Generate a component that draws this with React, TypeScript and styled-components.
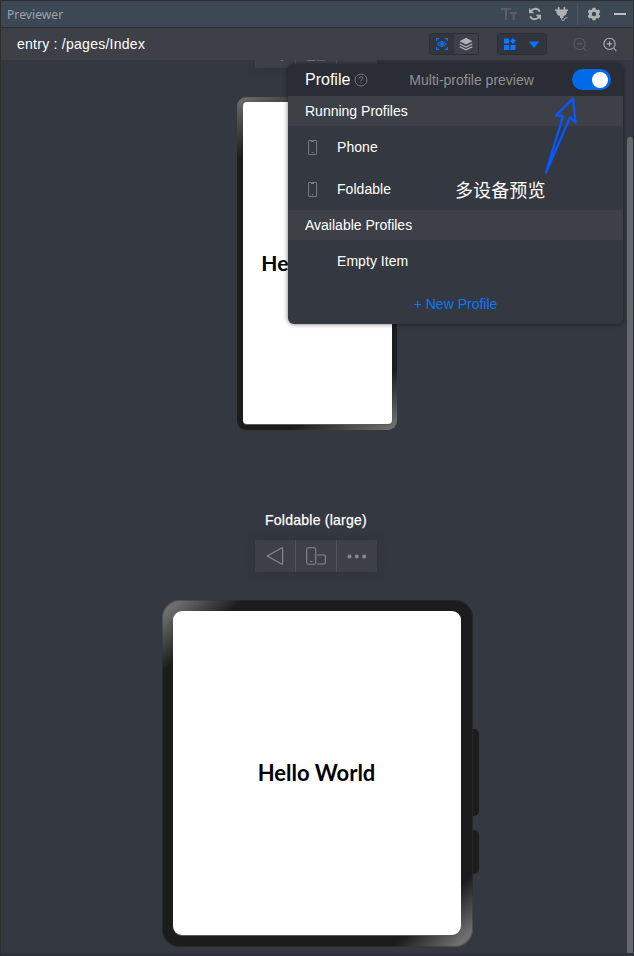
import React from "react";
import styled, { createGlobalStyle } from "styled-components";

const GlobalStyle = createGlobalStyle`
  * { box-sizing: border-box; }
  body { margin: 0; background: #343840; }
  svg { display: block; flex: none; }
`;

const Window = styled.div`
  position: relative;
  display: flex;
  flex-direction: column;
  width: 634px;
  height: 956px;
  overflow: hidden;
  border: 1px solid #2d2e30;
  border-bottom: 3px solid #30323a;
  background: #343840;
  color: #fff;
  font-family: "Liberation Sans", Arial, sans-serif;
  font-size: 14px;
`;

const TitleBar = styled.header`
  display: flex;
  align-items: center;
  flex: none;
  height: 27px;
  padding: 0 7px 0 6px;
  border-bottom: 1px solid #2b2c2f;
  background: #3d4855;
  color: #afb1b3;
`;

const WindowTitle = styled.h1`
  flex: 1;
  margin: 0;
  padding-top: 2px;
  color: #9da3a9;
  font: 400 12px/16px "Noto Sans", sans-serif;
  letter-spacing: 0.1px;
`;

const TitleIcons = styled.div`
  display: flex;
  align-items: center;
`;

const TitleIcon = styled.span<{ $gap?: number }>`
  margin-left: ${(p) => p.$gap ?? 0}px;
`;

const TitleDivider = styled.span`
  width: 1px;
  height: 21px;
  margin: 0 9px 0 7px;
  background: #515356;
`;

const Toolbar = styled.div`
  display: flex;
  align-items: center;
  flex: none;
  height: 32px;
  padding: 0 15px 0 16px;
  background: #3d4047;
`;

const PagePath = styled.div`
  flex: 1;
  line-height: 16px;
  letter-spacing: 0.26px;
`;

const ToggleGroup = styled.div`
  display: flex;
  width: 50px;
  height: 22px;
  margin-right: 18px;
  overflow: hidden;
  border: 1px solid #2b2d33;
  border-radius: 3px;
`;

const ToggleButton = styled.button<{ $dark?: boolean }>`
  display: flex;
  align-items: center;
  justify-content: center;
  flex: 1;
  padding: 0;
  border: 0;
  background: ${(p) => (p.$dark ? "#32353d" : "#3d4047")};
`;

const ZoomButtons = styled.div`
  display: flex;
  gap: 14px;
  margin-left: 7px;
`;

const Stage = styled.main`
  position: relative;
  display: flex;
  flex-direction: column;
  align-items: center;
  flex: 1;
  min-height: 0;
  overflow: hidden;
`;

const DeviceActions = styled.div<{ $top: number; $bottom: number }>`
  display: grid;
  grid-template-columns: 40px 40px 40px;
  gap: 1px;
  flex: none;
  height: 32px;
  margin: ${(p) => p.$top}px 2px ${(p) => p.$bottom}px 0;
  background: #50535a;
  box-shadow: 0 0 8px rgba(30, 32, 38, 0.25);
`;

const DeviceAction = styled.button`
  display: flex;
  align-items: center;
  justify-content: center;
  padding: 0;
  border: 0;
  background: #3d4048;
`;

const DeviceName = styled.h2`
  margin: 81px 0 0;
  padding-right: 2px;
  font-size: 14px;
  font-weight: 400;
  line-height: 18px;
  letter-spacing: 0.24px;
  -webkit-text-stroke: 0.25px #fff;
`;

const PhoneBody = styled.div`
  flex: none;
  width: 160px;
  height: 333px;
  padding: 5px 5px 6px 6px;
  border-radius: 9px;
  background:
    linear-gradient(150deg, #707070 0, rgba(29, 29, 29, 0) 54px),
    linear-gradient(330deg, #707070 4px, rgba(29, 29, 29, 0) 54px), #1c1c1c;
`;

const FoldableBody = styled.div`
  position: relative;
  flex: none;
  width: 311px;
  height: 347px;
  padding: 11px 12px 12px 11px;
  border-radius: 18px;
  background:
    linear-gradient(138deg, #6e6e6e 12px, rgba(29, 29, 29, 0) 54px),
    linear-gradient(318deg, #707070 12px, rgba(29, 29, 29, 0) 54px), #1c1c1c;
  box-shadow: inset 0 0 0 1px rgba(50, 50, 50, 0.5);
`;

const Screen = styled.div<{ $radius: number; $size: number }>`
  display: flex;
  align-items: center;
  justify-content: center;
  height: 100%;
  border-radius: ${(p) => p.$radius}px;
  background: #fff;
  box-shadow: 0 1px 0 #5b5b5b;
  color: #000;
  font: 700 ${(p) => p.$size}px/26px Lato, sans-serif;
  white-space: nowrap;
`;

const SideKey = styled.span<{ $top: number; $height: number }>`
  position: absolute;
  left: 100%;
  top: ${(p) => p.$top}px;
  width: 6px;
  height: ${(p) => p.$height}px;
  border-radius: 0 5px 5px 0;
  background: #1c1c1c;
`;

const ScrollThumb = styled.div`
  position: absolute;
  top: 77px;
  right: 0;
  bottom: 0;
  width: 6px;
  border-radius: 3px 3px 0 0;
  background: #65686c;
`;

const ProfileMenu = styled.section`
  position: absolute;
  top: 63px;
  left: 287px;
  width: 335px;
  height: 260px;
  border-radius: 6px;
  background: #343840;
  box-shadow: 0 0 5px rgba(0, 0, 0, 0.55);
`;

const MenuHeader = styled.header`
  display: flex;
  align-items: center;
  height: 32px;
  padding: 0 12px 0 17px;
  border-radius: 6px 6px 0 0;
  background: #2a2d34;
`;

const MenuTitle = styled.h2`
  margin: 0 4px 0 0;
  font-size: 16px;
  font-weight: 400;
`;

const PreviewLabel = styled.span`
  margin-left: 41px;
  color: #909192;
`;

const Switch = styled.button`
  display: flex;
  align-items: center;
  justify-content: flex-end;
  width: 39px;
  height: 21px;
  margin: -1px 0 0 auto;
  padding: 0 3px;
  border: 0;
  border-radius: 11px;
  background: #006ae8;
`;

const SwitchKnob = styled.span`
  width: 16px;
  height: 16px;
  border-radius: 50%;
  background: #fff;
`;

const SectionTitle = styled.h3`
  height: 30px;
  margin: 0;
  padding-left: 17px;
  background: #3d4047;
  font-size: 14px;
  font-weight: 400;
  line-height: 30px;
`;

const ProfileRow = styled.div`
  display: grid;
  grid-template-columns: 29px 1fr;
  align-items: center;
  height: 42px;
  padding-left: 20px;
  letter-spacing: 0.05px;
`;

const NewProfile = styled.button`
  display: block;
  width: 100%;
  height: 42px;
  padding: 2px 0 0;
  border: 0;
  background: transparent;
  color: #0877ff;
  font: inherit;
`;

const Callout = styled.p`
  position: absolute;
  top: 175px;
  left: 454px;
  margin: 0;
  font: 400 18px/26px "Noto Sans CJK SC", sans-serif;
  letter-spacing: 0.1px;
`;

const CalloutArrow = styled.svg`
  position: absolute;
  top: 94px;
  left: 539px;
`;

const PhoneIcon = () => (
  <svg width="9" height="15" viewBox="0 0 9 15" fill="none" stroke="#77797d">
    <rect x=".5" y=".5" width="8" height="14" rx=".3" />
    <path d="M3 1.5h3M3.800 12.500h1.400" />
  </svg>
);

const Actions = ({ top, bottom }: { top: number; bottom: number }) => (
  <DeviceActions $top={top} $bottom={bottom}>
    <DeviceAction aria-label="Back">
      <svg width="18" height="20" viewBox="0 0 18 20" fill="none" stroke="#85878a" strokeWidth="1.2" strokeLinejoin="round">
        <path d="M1.200 10 16 1.800q.6-.3.6.6v15.200q0 .9-.6.6Z" />
      </svg>
    </DeviceAction>
    <DeviceAction aria-label="Rotate device">
      <svg width="20" height="18" viewBox="0 0 20 18" fill="none" stroke="#85878a" strokeWidth="1.1">
        <rect x=".7" y=".7" width="9" height="16.500" rx="1.500" />
        <path d="M4 14.500h2.400M11 8h7q1.400 0 1.400 1.400v6.200q0 1.400-1.400 1.400h-7" />
      </svg>
    </DeviceAction>
    <DeviceAction aria-label="More">
      <svg width="20" height="6" viewBox="0 0 20 6" fill="#85878a">
        <circle cx="2.500" cy="3.500" r="2" />
        <circle cx="9.800" cy="3.500" r="2" />
        <circle cx="17.100" cy="3.500" r="2" />
      </svg>
    </DeviceAction>
  </DeviceActions>
);

const ZoomIcon = ({ plus }: { plus?: boolean }) => (
  <svg width="16" height="16" viewBox="0 0 16 16" fill="none" stroke={plus ? "#aeb0b3" : "#5a5d63"} strokeWidth="1.1">
    <circle cx="7.500" cy="7.900" r="5.600" />
    <path d="m11.600 12 2.600 2.800M4.800 7.900h5.400" />
    {plus && <path d="M7.500 5.200v5.400" />}
  </svg>
);

export default function App() {
  return (
    <>
      <GlobalStyle />
      <Window>
        <TitleBar>
          <WindowTitle>Previewer</WindowTitle>
          <TitleIcons>
            <TitleIcon>
              <svg width="17" height="14" viewBox="0 0 17 14" fill="#5e5e5d">
                <path d="M0 1h10v2H6v10H4V3H0ZM9 5h7v2h-2.500v6h-2V7H9Z" />
              </svg>
            </TitleIcon>
            <TitleIcon $gap={10}>
              <svg width="14" height="14" viewBox="0 0 14 14" fill="none" stroke="#afb1b3" strokeWidth="2">
                <path d="M11.800 4.600A5 5 0 0 0 3 4.200M2.200 9.400A5 5 0 0 0 11 9.800" />
                <path fill="#afb1b3" stroke="none" d="M1 1v5.300h5.300ZM13 13V7.700H7.700Z" />
              </svg>
            </TitleIcon>
            <TitleIcon $gap={12}>
              <svg width="16" height="16" viewBox="0 0 16 16" fill="#afb1b3">
                <path d="M1 3.500h2.500L4 1h1.500v2.500h4V1H11l.5 2.500H14V5h-1c0 3-1.300 4.800-3.500 5v2H6v-2C3.500 9.800 2.300 8 2.300 5H1Z" />
                <path d="M7.700 11v2.200q0 1.300 1.400 1.300t1.400-1.300q0-1.500 3-1.500" fill="none" stroke="#afb1b3" />
              </svg>
            </TitleIcon>
            <TitleDivider />
            <TitleIcon>
              <svg width="14" height="14" viewBox="0 0 14 14">
                <path fill="#afb1b3" fillRule="evenodd" d="M5.500.7h3l.4 1.700 1.200.7 1.700-.6 1.500 2.600L12 6.400v1.200l1.300 1.300-1.500 2.600-1.700-.6-1.200.7-.4 1.700h-3l-.4-1.700-1.200-.7-1.700.6L.7 8.900 2 7.600V6.400L.7 5.100l1.500-2.600 1.700.6 1.200-.7ZM7 4.800a2.200 2.200 0 1 0 0 4.400 2.200 2.200 0 0 0 0-4.400Z" />
              </svg>
            </TitleIcon>
            <TitleIcon $gap={13}>
              <svg width="12" height="14" viewBox="0 0 12 14">
                <path d="M0 7h12" stroke="#bdbfc1" strokeWidth="2" />
              </svg>
            </TitleIcon>
          </TitleIcons>
        </TitleBar>

        <Toolbar>
          <PagePath>entry : /pages/Index</PagePath>
          <ToggleGroup>
            <ToggleButton $dark aria-label="Preview">
              <svg width="12" height="12" viewBox="0 0 12 12" fill="none" stroke="#0877ff" strokeWidth="1.100">
                <path d="M.6 3V.6H3M9 .6h2.400V3M11.400 9v2.400H9M3 11.400H.6V9" />
                <path d="M1.500 6Q6 .9 10.500 6 6 11.100 1.500 6Z" />
                <circle cx="6" cy="6" r="1.300" fill="#0877ff" />
              </svg>
            </ToggleButton>
            <ToggleButton aria-label="Layers">
              <svg width="14" height="14" viewBox="0 0 14 14" fill="none" stroke="#b0b1b3" strokeWidth="1.200">
                <path fill="#b0b1b3" stroke="none" d="m7 .8 6.500 3.400L7 7.600.5 4.200Z" />
                <path d="m.7 6.800 6.300 3.300 6.300-3.300M.7 9.600 7 12.900l6.300-3.300" />
              </svg>
            </ToggleButton>
          </ToggleGroup>
          <ToggleGroup>
            <ToggleButton $dark aria-label="Profiles">
              <svg width="12" height="12" viewBox="0 0 12 12" fill="#0877ff">
                <path d="M0 .5h5v5H0ZM0 7h5v5H0ZM6.500 7h5v5h-5ZM9 0l3 3-3 3-3-3Z" />
              </svg>
            </ToggleButton>
            <ToggleButton $dark aria-label="Open profiles">
              <svg width="10" height="7" viewBox="0 0 10 7">
                <path d="M.7.500h8.600q.8 0 .3.700L5.600 6.300q-.6.700-1.200 0L.4 1.200Q-.1.500.7.500Z" fill="#0877ff" />
              </svg>
            </ToggleButton>
          </ToggleGroup>
          <ZoomButtons>
            <ZoomIcon />
            <ZoomIcon plus />
          </ZoomButtons>
        </Toolbar>

        <Stage>
          <Actions top={-24} bottom={29} />
          <PhoneBody>
            <Screen $radius={4} $size={21}>Hello World</Screen>
          </PhoneBody>
          <DeviceName>Foldable (large)</DeviceName>
          <Actions top={11} bottom={28} />
          <FoldableBody>
            <Screen $radius={9} $size={22}>Hello World</Screen>
            <SideKey $top={129} $height={87} />
            <SideKey $top={230} $height={44} />
          </FoldableBody>
          <ScrollThumb />
        </Stage>

        <ProfileMenu>
          <MenuHeader>
            <MenuTitle>Profile</MenuTitle>
            <svg width="14" height="14" viewBox="0 0 14 14" fill="none" stroke="#77797d">
              <circle cx="7" cy="7" r="6" />
              <path d="M5.200 5.500q0-1.800 1.800-1.800t1.800 1.600Q8.800 6.300 7 7.200V8.500M7 9.500v1" />
            </svg>
            <PreviewLabel>Multi-profile preview</PreviewLabel>
            <Switch role="switch" aria-checked="true" aria-label="Multi-profile preview">
              <SwitchKnob />
            </Switch>
          </MenuHeader>
          <SectionTitle>Running Profiles</SectionTitle>
          <ProfileRow><PhoneIcon /><span>Phone</span></ProfileRow>
          <ProfileRow><PhoneIcon /><span>Foldable</span></ProfileRow>
          <SectionTitle>Available Profiles</SectionTitle>
          <ProfileRow><span /><span>Empty Item</span></ProfileRow>
          <NewProfile>+ New Profile</NewProfile>
        </ProfileMenu>

        <Callout>多设备预览</Callout>
        <CalloutArrow width="40" height="84" viewBox="540 95 40 84" fill="none" stroke="#0758ff" strokeWidth="2.300" strokeLinejoin="round">
          <path d="m546 172.500 17-56.500-7-.5 17-17 2.500 24-5.500-5Z" />
        </CalloutArrow>
      </Window>
    </>
  );
}
